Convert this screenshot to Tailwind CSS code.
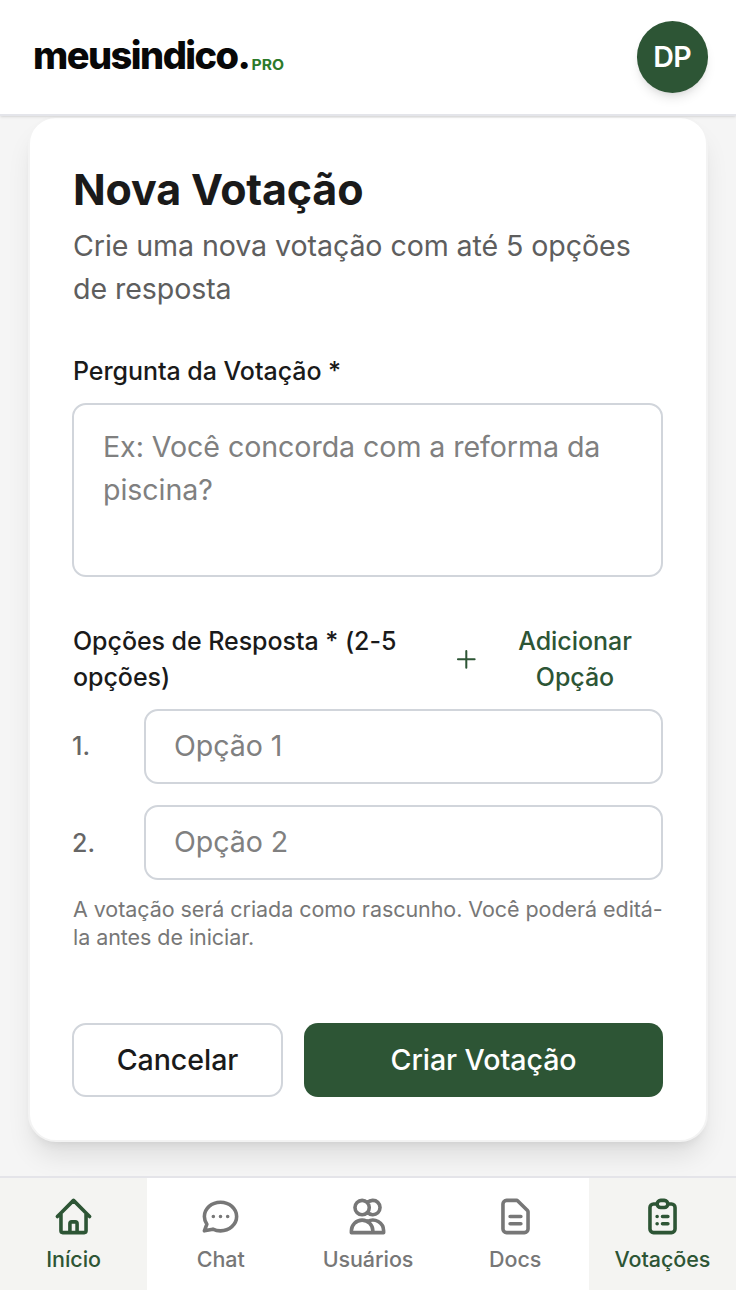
<!DOCTYPE html>
<html lang="pt-BR">
<head>
    <meta charset="UTF-8">
    <meta name="viewport" content="width=device-width, initial-scale=1.0">
    <title>Nova Votação - meusindico.PRO</title>
    <script src="https://cdn.jsdelivr.net/npm/@tailwindcss/browser@4"></script>
</head>
<body class="bg-[#f5f5f5] font-[Inter,sans-serif] text-[#1a1a1a]">
    <div class="h-[1290px] flex flex-col overflow-hidden">
        <header class="relative z-10 h-[116px] shrink-0 bg-white border-b-2 border-[#e4e5ea] shadow-sm flex items-center justify-between pl-[30px] pr-7">
            <svg class="w-[258px] h-14" viewBox="0 0 258 56" role="img" aria-label="meusindico.PRO">
                <text x="3" y="40" textLength="218" lengthAdjust="spacing" class="text-[38px] font-extrabold fill-[#080808]">meusindico.</text>
                <text x="221.500" y="40.500" textLength="32.500" lengthAdjust="spacingAndGlyphs" class="text-[15px] font-bold fill-[#2c7a2a]">PRO</text>
            </svg>
            <button class="size-[71.500px] rounded-full bg-[#2d5535] text-white text-[28.600px] font-semibold tracking-[-0.5px] shadow-[0_7px_11px_-2px_rgba(0,0,0,0.1),0_4px_7px_-4px_rgba(0,0,0,0.1)]">DP</button>
        </header>

        <main class="flex-1 px-7">
            <form class="h-[1026px] rounded-[28px] bg-white border-2 border-[#f3f3f3] pt-[43px] pl-[42px] pr-[43px] shadow-[0_18px_27px_-5px_rgba(0,0,0,0.1),0_7px_11px_-7px_rgba(0,0,0,0.1)]">
                <h1 class="pl-px text-[43px] leading-[57px] font-bold tracking-[-0.2px]">Nova Votação</h1>
                <p class="pl-px mt-1.5 text-[28.600px] leading-[43px] tracking-[-0.09px] text-[#5e5e5e]">Crie uma nova votação com até 5 opções de resposta</p>

                <label for="pergunta" class="block pl-px mt-[43px] text-[25px] leading-9 font-medium tracking-[-0.05px]">Pergunta da Votação *</label>
                <textarea id="pergunta" class="block w-full h-[174px] mt-3.5 px-[29px] py-5 rounded-[14px] border-2 border-[#d1d5db] text-[28.600px] leading-[43px] tracking-[-0.07px] resize-none placeholder:text-[#808080]" placeholder="Ex: Você concorda com a reforma da piscina?"></textarea>

                <div class="mt-[46px] flex items-center justify-between text-[25px] leading-9 font-medium tracking-[-0.05px]">
                    <label class="pl-px w-[340px]">Opções de Resposta * (2-5 opções)</label>
                    <button type="button" class="flex items-center gap-[27px] pr-[21px] text-[#2d5535]">
                        <svg class="size-[28.600px]" viewBox="0 0 24 24" fill="none" stroke="currentColor" stroke-width="1.700" stroke-linecap="round"><path d="M5 12h14M12 5v14"/></svg>
                        <span class="w-[134px]">Adicionar Opção</span>
                    </button>
                </div>

                <div class="mt-3.5 flex flex-col gap-[21px]">
                    <div class="flex items-center">
                        <span class="w-[72px] text-[25px] font-medium text-[#666666]">1.</span>
                        <input type="text" class="flex-1 h-[75px] px-7 pb-0.5 rounded-[14px] border-2 border-[#d1d5db] text-[28.600px] tracking-[-0.07px] placeholder:text-[#808080]" placeholder="Opção 1">
                    </div>
                    <div class="flex items-center">
                        <span class="pt-0.5 w-[72px] text-[25px] font-medium text-[#666666]">2.</span>
                        <input type="text" class="flex-1 h-[75px] px-7 pb-0.5 rounded-[14px] border-2 border-[#d1d5db] text-[28.600px] tracking-[-0.07px] placeholder:text-[#808080]" placeholder="Opção 2">
                    </div>
                </div>
                <p class="pl-px mt-[15px] text-[21.500px] leading-7 tracking-[-0.06px] whitespace-nowrap text-[#777777]">A votação será criada como rascunho. Você poderá editá-<br>la antes de iniciar.</p>

                <div class="mt-[72px] flex gap-[21px] text-[28.600px] font-medium tracking-[-0.07px]">
                    <button type="button" class="w-[211px] h-[74px] rounded-[14px] border-2 border-[#d1d5db]">Cancelar</button>
                    <button type="submit" class="flex-1 h-[74px] rounded-[14px] bg-[#2d5535] text-white">Criar Votação</button>
                </div>
            </form>
        </main>

        <nav class="relative z-10 h-[114px] shrink-0 border-t-2 border-[#e4e4e9] bg-white grid grid-cols-5 text-[21.500px] leading-[28.500px] font-medium tracking-[-0.06px] text-[#777777]">
            <a class="flex flex-col items-center pt-[17px] gap-[7px] bg-[#f4f4f2] text-[#2d5535]">
                <svg class="size-[43px]" viewBox="0 0 24 24" fill="none" stroke="currentColor" stroke-width="2" stroke-linecap="round" stroke-linejoin="round"><path d="M3 12l2-2m0 0l7-7 7 7M5 10v10a1 1 0 001 1h3m10-11l2 2m-2-2v10a1 1 0 01-1 1h-3m-6 0a1 1 0 001-1v-4a1 1 0 011-1h2a1 1 0 011 1v4a1 1 0 001 1m-6 0h6"/></svg>
                <span>Início</span>
            </a>
            <a class="flex flex-col items-center pt-[17px] gap-[7px]">
                <svg class="size-[43px]" viewBox="0 0 24 24" fill="none" stroke="currentColor" stroke-width="2" stroke-linecap="round" stroke-linejoin="round"><path d="M8 12h.01M12 12h.01M16 12h.01M21 12c0 4.418-4.030 8-9 8a9.863 9.863 0 01-4.255-.949L3 20l1.395-3.720C3.512 15.042 3 13.574 3 12c0-4.418 4.030-8 9-8s9 3.582 9 8z"/></svg>
                <span>Chat</span>
            </a>
            <a class="flex flex-col items-center pt-[17px] gap-[7px]">
                <svg class="size-[43px]" viewBox="0 0 24 24" fill="none" stroke="currentColor" stroke-width="2" stroke-linecap="round" stroke-linejoin="round"><path d="M12 4.354a4 4 0 110 5.292M15 21H3v-1a6 6 0 0112 0v1zm0 0h6v-1a6 6 0 00-9-5.197M13 7a4 4 0 11-8 0 4 4 0 018 0z"/></svg>
                <span>Usuários</span>
            </a>
            <a class="flex flex-col items-center pt-[17px] gap-[7px]">
                <svg class="size-[43px]" viewBox="0 0 24 24" fill="none" stroke="currentColor" stroke-width="2" stroke-linecap="round" stroke-linejoin="round"><path d="M9 12h6m-6 4h6m2 5H7a2 2 0 01-2-2V5a2 2 0 012-2h5.586a1 1 0 01.707.293l5.414 5.414a1 1 0 01.293.707V19a2 2 0 01-2 2z"/></svg>
                <span>Docs</span>
            </a>
            <a class="flex flex-col items-center pt-[17px] gap-[7px] bg-[#f4f4f2] text-[#2d5535]">
                <svg class="size-[43px]" viewBox="0 0 24 24" fill="none" stroke="currentColor" stroke-width="2" stroke-linecap="round" stroke-linejoin="round"><path d="M9 5H7a2 2 0 00-2 2v12a2 2 0 002 2h10a2 2 0 002-2V7a2 2 0 00-2-2h-2M9 5a2 2 0 002 2h2a2 2 0 002-2M9 5a2 2 0 012-2h2a2 2 0 012 2m-3 7h3m-3 4h3m-6-4h.01M9 16h.01"/></svg>
                <span>Votações</span>
            </a>
        </nav>
    </div>
</body>
</html>
